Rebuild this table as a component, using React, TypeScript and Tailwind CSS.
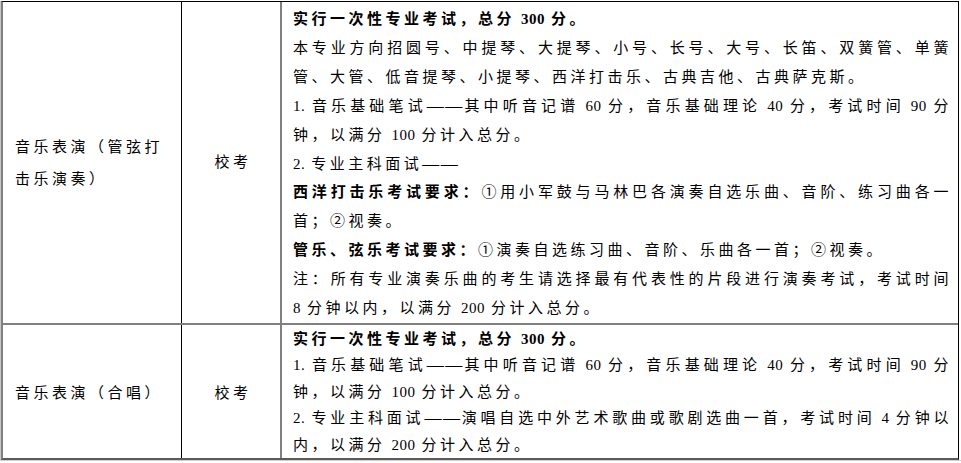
import React from "react";

type Line = { b?: string; t?: string; j?: boolean };

function fmt(s: string) {
  const parts = s.split(/([0-9.]+| +|—+)/);
  return parts.map((p, i) => {
    if (/^[0-9.]+$/.test(p))
      return (
        <span key={i} className="tracking-[0.5px]">
          {p}
        </span>
      );
    if (/^ +$/.test(p))
      return <span key={i} className="inline-block w-[6px]" />;
    if (/^—+$/.test(p))
      return (
        <span key={i} className="text-[17px] tracking-[1.5px]">
          {p}
        </span>
      );
    return <React.Fragment key={i}>{p}</React.Fragment>;
  });
}

function Lines({ lines }: { lines: Line[] }) {
  return (
    <>
      {lines.map((l, i) => (
        <div
          key={i}
          className={l.j ? "text-justify [text-align-last:justify]" : "text-left"}
        >
          {l.b && <span className="font-bold">{fmt(l.b)}</span>}
          {l.t && fmt(l.t)}
        </div>
      ))}
    </>
  );
}

const row1: Line[] = [
  { b: "实行一次性专业考试，总分 300 分。" },
  { t: "本专业方向招圆号、中提琴、大提琴、小号、长号、大号、长笛、双簧管、单簧", j: true },
  { t: "管、大管、低音提琴、小提琴、西洋打击乐、古典吉他、古典萨克斯。" },
  { t: "1. 音乐基础笔试——其中听音记谱 60 分，音乐基础理论 40 分，考试时间 90 分", j: true },
  { t: "钟，以满分 100 分计入总分。" },
  { t: "2. 专业主科面试——" },
  { b: "西洋打击乐考试要求：", t: "①用小军鼓与马林巴各演奏自选乐曲、音阶、练习曲各一", j: true },
  { t: "首；②视奏。" },
  { b: "管乐、弦乐考试要求：", t: "①演奏自选练习曲、音阶、乐曲各一首；②视奏。" },
  { t: "注：所有专业演奏乐曲的考生请选择最有代表性的片段进行演奏考试，考试时间", j: true },
  { t: "8 分钟以内，以满分 200 分计入总分。" },
];

const row2: Line[] = [
  { b: "实行一次性专业考试，总分 300 分。" },
  { t: "1. 音乐基础笔试——其中听音记谱 60 分，音乐基础理论 40 分，考试时间 90 分", j: true },
  { t: "钟，以满分 100 分计入总分。" },
  { t: "2. 专业主科面试——演唱自选中外艺术歌曲或歌剧选曲一首，考试时间 4 分钟以", j: true },
  { t: "内，以满分 200 分计入总分。" },
];

export default function App() {
  return (
    <div className="w-[961px] h-[463px] bg-white overflow-hidden font-['Liberation_Serif','Noto_Sans_CJK_SC',serif] text-[15px] tracking-[3.5px] text-black">
      <div className="pt-[1px] border-b border-b-[#d0d0d0] w-[961px]">
        <div className="border-l border-l-[#c8c8c8] w-[960px]">
          <div className="w-[958px] border-l-2 border-l-[#808080] border-t border-t-black border-r border-r-black border-b-2 border-b-[#5a5a5a]">
            {/* Row 1 */}
            <div className="grid grid-cols-[179px_100px_675px] border-b-2 border-b-[#808080]">
              <div className="border-r border-r-black flex items-center pl-[12px] leading-[32px] pt-[2px]">
                <div>
                  <div>音乐表演（管弦打</div>
                  <div>击乐演奏）</div>
                </div>
              </div>
              <div className="border-r-2 border-r-[#808080] flex items-center justify-center pl-[4px]">
                校考
              </div>
              <div className="pl-[11px] pr-[5px] pt-[3px] leading-[28.9px]">
                <Lines lines={row1} />
              </div>
            </div>
            {/* Row 2 */}
            <div className="grid grid-cols-[179px_100px_675px]">
              <div className="border-r border-r-black flex items-center pl-[12px] leading-[32px] pt-[3px]">
                音乐表演（合唱）
              </div>
              <div className="border-r-2 border-r-[#808080] flex items-center justify-center pl-[4px] pt-[3px]">
                校考
              </div>
              <div className="pl-[11px] pr-[5px] pt-[1px] leading-[26.4px]">
                <Lines lines={row2} />
              </div>
            </div>
          </div>
        </div>
      </div>
    </div>
  );
}
